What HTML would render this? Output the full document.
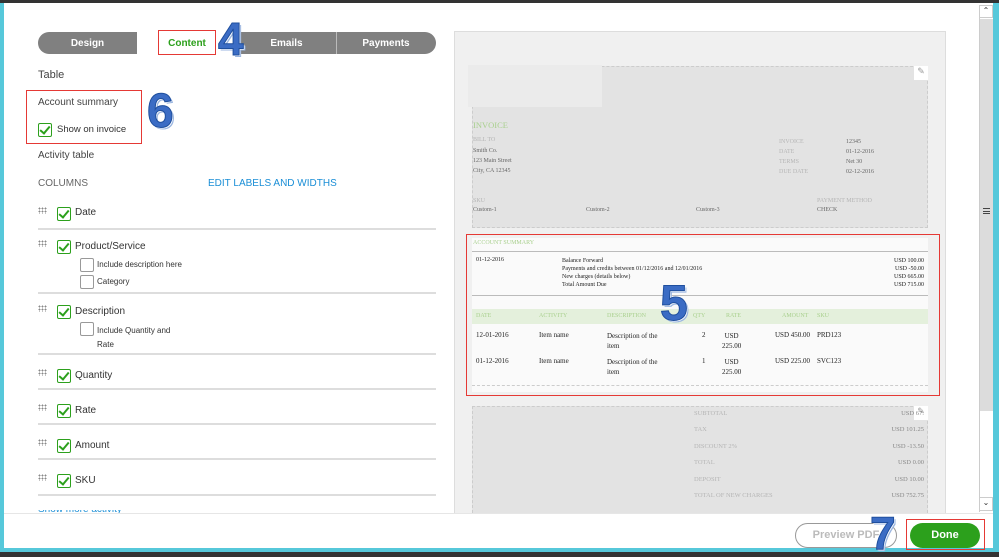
<!DOCTYPE html>
<html><head><meta charset="utf-8"><style>
*{margin:0;padding:0;box-sizing:border-box}
body{width:999px;height:557px;overflow:hidden;background:#fff;font-family:"Liberation Sans",sans-serif;position:relative}
.a{position:absolute}
.s{font-family:"Liberation Serif",serif;position:absolute;white-space:nowrap}
.cb{position:absolute;width:14px;height:14px;border:1.5px solid #2ca01c;border-radius:2px;background:#fff}
.cb:after{content:"";position:absolute;left:3px;top:0px;width:4px;height:8px;border:solid #2ca01c;border-width:0 2px 2px 0;transform:rotate(40deg)}
.ub{position:absolute;width:14px;height:14px;border:1px solid #999;border-radius:2px;background:#fff}
.hr{position:absolute;left:38px;width:398px;height:2px;background:#ddd}
.grip{position:absolute;width:9px;height:7px;background-image:radial-gradient(circle,#888 0.8px,transparent 1px);background-size:3px 3px}
.big{position:absolute;font-family:"Liberation Sans",sans-serif;font-weight:bold;color:#3b6cc4;-webkit-text-stroke:1px #1f4f9e;text-shadow:1px 1px 0 #fff,2px 2px 0 #9bb6e0}
.g{color:#a9d08e}
.gy{color:#b5b5b5}
</style></head><body>
<div class="a" style="left:0;top:0;width:999px;height:3px;background:#333"></div>
<div class="a" style="left:0;top:3px;width:4px;height:549px;background:#56c8da"></div>
<div class="a" style="left:993px;top:3px;width:6px;height:549px;background:#56c8da"></div>
<div class="a" style="left:0;top:548px;width:999px;height:4px;background:#56c8da"></div>
<div class="a" style="left:0;top:552px;width:999px;height:5px;background:#333"></div>

<div class="a" style="left:38px;top:32px;width:398px;height:22px;background:#808080;border-radius:11px"></div>
<div class="a" style="left:137px;top:32px;width:100px;height:22px;background:#fff"></div>
<div class="a" style="left:336px;top:32px;width:1px;height:22px;background:#bbb"></div>
<div class="a" style="left:38px;top:38px;width:99px;text-align:center;color:#fff;font-size:10px;font-weight:bold">Design</div>
<div class="a" style="left:137px;top:38px;width:100px;text-align:center;color:#2ca01c;font-size:10px;font-weight:bold">Content</div>
<div class="a" style="left:237px;top:38px;width:99px;text-align:center;color:#fff;font-size:10px;font-weight:bold">Emails</div>
<div class="a" style="left:336px;top:38px;width:100px;text-align:center;color:#fff;font-size:10px;font-weight:bold">Payments</div>
<div class="a" style="left:158px;top:30px;width:58px;height:25px;border:1px solid #e53935"></div>
<div class="big" style="left:218px;top:14px;font-size:46px;line-height:50px">4</div>

<div class="a" style="left:38px;top:69px;font-size:11px;color:#444">Table</div>
<div class="a" style="left:26px;top:90px;width:116px;height:54px;border:1px solid #e53935"></div>
<div class="a" style="left:38px;top:97px;font-size:10px;color:#444">Account summary</div>
<div class="cb" style="left:38px;top:123px"></div>
<div class="a" style="left:57px;top:124px;font-size:9.5px;color:#333">Show on invoice</div>
<div class="big" style="left:147px;top:86px;font-size:48px;line-height:52px">6</div>
<div class="a" style="left:38px;top:150px;font-size:10px;color:#444">Activity table</div>
<div class="a" style="left:38px;top:178px;font-size:10px;color:#666">COLUMNS</div>
<div class="a" style="left:208px;top:178px;font-size:10px;color:#1a8ed6">EDIT LABELS AND WIDTHS</div>

<div class="grip" style="left:38px;top:207px"></div><div class="cb" style="left:57px;top:207px"></div><div class="a" style="left:75px;top:207px;font-size:10px;color:#333">Date</div>
<div class="hr" style="top:228px"></div>
<div class="grip" style="left:38px;top:240px"></div><div class="cb" style="left:57px;top:240px"></div><div class="a" style="left:75px;top:241px;font-size:10px;color:#333">Product/Service</div>
<div class="ub" style="left:80px;top:258px"></div><div class="a" style="left:97px;top:260px;font-size:8px;color:#333">Include description here</div>
<div class="ub" style="left:80px;top:275px"></div><div class="a" style="left:97px;top:277px;font-size:8px;color:#333">Category</div>
<div class="hr" style="top:292px"></div>
<div class="grip" style="left:38px;top:305px"></div><div class="cb" style="left:57px;top:305px"></div><div class="a" style="left:75px;top:306px;font-size:10px;color:#333">Description</div>
<div class="ub" style="left:80px;top:322px"></div><div class="a" style="left:97px;top:324px;font-size:8px;color:#333;line-height:14px">Include Quantity and<br>Rate</div>
<div class="hr" style="top:353px"></div>
<div class="grip" style="left:38px;top:369px"></div><div class="cb" style="left:57px;top:369px"></div><div class="a" style="left:75px;top:370px;font-size:10px;color:#333">Quantity</div>
<div class="hr" style="top:388px"></div>
<div class="grip" style="left:38px;top:404px"></div><div class="cb" style="left:57px;top:404px"></div><div class="a" style="left:75px;top:405px;font-size:10px;color:#333">Rate</div>
<div class="hr" style="top:423px"></div>
<div class="grip" style="left:38px;top:439px"></div><div class="cb" style="left:57px;top:439px"></div><div class="a" style="left:75px;top:440px;font-size:10px;color:#333">Amount</div>
<div class="hr" style="top:458px"></div>
<div class="grip" style="left:38px;top:474px"></div><div class="cb" style="left:57px;top:474px"></div><div class="a" style="left:75px;top:475px;font-size:10px;color:#333">SKU</div>
<div class="hr" style="top:494px"></div>
<div class="a" style="left:38px;top:510px;width:100px;height:3px;overflow:hidden"><div style="font-size:10px;color:#1a8ed6;margin-top:-6px">Show more activity options</div></div>

<div class="a" style="left:454px;top:31px;width:492px;height:482px;background:#f0f0f0;border:1px solid #ddd;border-bottom:none"></div>
<div class="a" style="left:472px;top:66px;width:456px;height:162px;background:#e3e3e3;border:1px dashed #ccc"></div>
<div class="a" style="left:468px;top:65px;width:134px;height:42px;background:#ebebeb"></div>
<div class="a" style="left:914px;top:66px;width:14px;height:14px;background:#fff;color:#999;font-size:9px;text-align:center">✎</div>
<div class="s g" style="left:473px;top:120px;font-size:8.5px">INVOICE</div>
<div class="s gy" style="left:473px;top:137px;font-size:6px">BILL TO</div>
<div class="s" style="left:473px;top:146px;font-size:6px;color:#666;line-height:10px">Smith Co.<br>123 Main Street<br>City, CA 12345</div>
<div class="s gy" style="left:779px;top:137px;font-size:6px;line-height:10px">INVOICE<br>DATE<br>TERMS<br>DUE DATE</div>
<div class="s" style="left:846px;top:137px;font-size:6px;color:#666;line-height:10px">12345<br>01-12-2016<br>Net 30<br>02-12-2016</div>
<div class="s gy" style="left:473px;top:198px;font-size:6px">SKU</div>
<div class="s gy" style="left:817px;top:198px;font-size:6px">PAYMENT METHOD</div>
<div class="s" style="left:473px;top:207px;font-size:6px;color:#666">Custom-1</div>
<div class="s" style="left:586px;top:207px;font-size:6px;color:#666">Custom-2</div>
<div class="s" style="left:696px;top:207px;font-size:6px;color:#666">Custom-3</div>
<div class="s" style="left:817px;top:207px;font-size:6px;color:#666">CHECK</div>

<div class="a" style="left:472px;top:238px;width:456px;height:154px;background:#fafafa"></div>
<div class="s g" style="left:473px;top:240px;font-size:6px">ACCOUNT SUMMARY</div>
<div class="a" style="left:472px;top:251px;width:456px;height:1px;background:#bbb"></div>
<div class="s" style="left:476px;top:257px;font-size:6px;color:#222">01-12-2016</div>
<div class="s" style="left:562px;top:257px;font-size:6px;color:#222;line-height:8px">Balance Forward<br>Payments and credits between 01/12/2016 and 12/01/2016<br>New charges (details below)<br>Total Amount Due</div>
<div class="s" style="left:880px;top:257px;width:44px;text-align:right;font-size:6px;color:#222;line-height:8px">USD 100.00<br>USD -50.00<br>USD 665.00<br>USD 715.00</div>
<div class="a" style="left:472px;top:295px;width:456px;height:1px;background:#bbb"></div>
<div class="a" style="left:472px;top:309px;width:456px;height:15px;background:#e4f0dc"></div>
<div class="s g" style="left:476px;top:313px;font-size:6px">DATE</div>
<div class="s g" style="left:539px;top:313px;font-size:6px">ACTIVITY</div>
<div class="s g" style="left:607px;top:313px;font-size:6px">DESCRIPTION</div>
<div class="s g" style="left:693px;top:313px;font-size:6px">QTY</div>
<div class="s g" style="left:726px;top:313px;font-size:6px">RATE</div>
<div class="s g" style="left:782px;top:313px;font-size:6px">AMOUNT</div>
<div class="s g" style="left:817px;top:313px;font-size:6px">SKU</div>
<div class="s" style="left:476px;top:331px;font-size:7px;color:#222">12-01-2016</div>
<div class="s" style="left:539px;top:331px;font-size:7px;color:#222">Item name</div>
<div class="s" style="left:607px;top:331px;font-size:7px;color:#222;line-height:10px">Description of the<br>item</div>
<div class="s" style="left:702px;top:331px;font-size:7px;color:#222">2</div>
<div class="s" style="left:722px;top:331px;font-size:7px;color:#222;line-height:10px;text-align:center">USD<br>225.00</div>
<div class="s" style="left:775px;top:331px;font-size:7px;color:#222">USD 450.00</div>
<div class="s" style="left:817px;top:331px;font-size:7px;color:#222">PRD123</div>
<div class="s" style="left:476px;top:357px;font-size:7px;color:#222">01-12-2016</div>
<div class="s" style="left:539px;top:357px;font-size:7px;color:#222">Item name</div>
<div class="s" style="left:607px;top:357px;font-size:7px;color:#222;line-height:10px">Description of the<br>item</div>
<div class="s" style="left:702px;top:357px;font-size:7px;color:#222">1</div>
<div class="s" style="left:722px;top:357px;font-size:7px;color:#222;line-height:10px;text-align:center">USD<br>225.00</div>
<div class="s" style="left:775px;top:357px;font-size:7px;color:#222">USD 225.00</div>
<div class="s" style="left:817px;top:357px;font-size:7px;color:#222">SVC123</div>
<div class="a" style="left:472px;top:385px;width:456px;border-top:1px dashed #ccc"></div>
<div class="a" style="left:466px;top:234px;width:474px;height:162px;border:1px solid #e53935"></div>
<div class="big" style="left:660px;top:276px;font-size:50px;line-height:54px">5</div>

<div class="a" style="left:472px;top:406px;width:456px;height:107px;background:#e3e3e3;border:1px dashed #ccc;border-bottom:none"></div>
<div class="a" style="left:914px;top:406px;width:14px;height:14px;background:#fff;color:#999;font-size:9px;text-align:center">✎</div>
<div class="s gy" style="left:694px;top:406px;font-size:6.5px;line-height:16.4px">SUBTOTAL<br>TAX<br>DISCOUNT 2%<br>TOTAL<br>DEPOSIT<br>TOTAL OF NEW CHARGES</div>
<div class="s" style="left:850px;top:406px;width:74px;text-align:right;font-size:6.5px;color:#888;line-height:16.4px">USD 67:<br>USD 101.25<br>USD -13.50<br>USD 0.00<br>USD 10.00<br>USD 752.75</div>

<div class="a" style="left:979px;top:5px;width:14px;height:507px;background:#fff;border-left:1px solid #ccc"></div>
<div class="a" style="left:979px;top:19px;width:14px;height:392px;background:#dcdcdc;border-left:1px solid #ccc"></div>
<div class="a" style="left:979px;top:5px;width:14px;height:13px;font-size:8px;color:#333;text-align:center;border:1px solid #ccc">⌃</div>
<div class="a" style="left:979px;top:497px;width:14px;height:14px;font-size:8px;color:#333;text-align:center;border:1px solid #ccc">⌄</div>
<div class="a" style="left:983px;top:208px;width:7px;height:6px;border-top:1px solid #444;border-bottom:1px solid #444"></div>
<div class="a" style="left:983px;top:211px;width:7px;height:1px;background:#444"></div>

<div class="a" style="left:4px;top:513px;width:989px;height:1px;background:#e6e6e6"></div>
<div class="a" style="left:795px;top:523px;width:102px;height:25px;border:1.5px solid #999;border-radius:13px;color:#bbb;font-size:11px;font-weight:bold;text-align:center;line-height:22px">Preview PDF</div>
<div class="a" style="left:910px;top:523px;width:70px;height:25px;background:#2ca01c;border-radius:13px;color:#fff;font-size:11px;font-weight:bold;text-align:center;line-height:25px">Done</div>
<div class="a" style="left:906px;top:519px;width:79px;height:31px;border:1px solid #e53935"></div>
<div class="big" style="left:870px;top:508px;font-size:46px;line-height:50px">7</div>
</body></html>
